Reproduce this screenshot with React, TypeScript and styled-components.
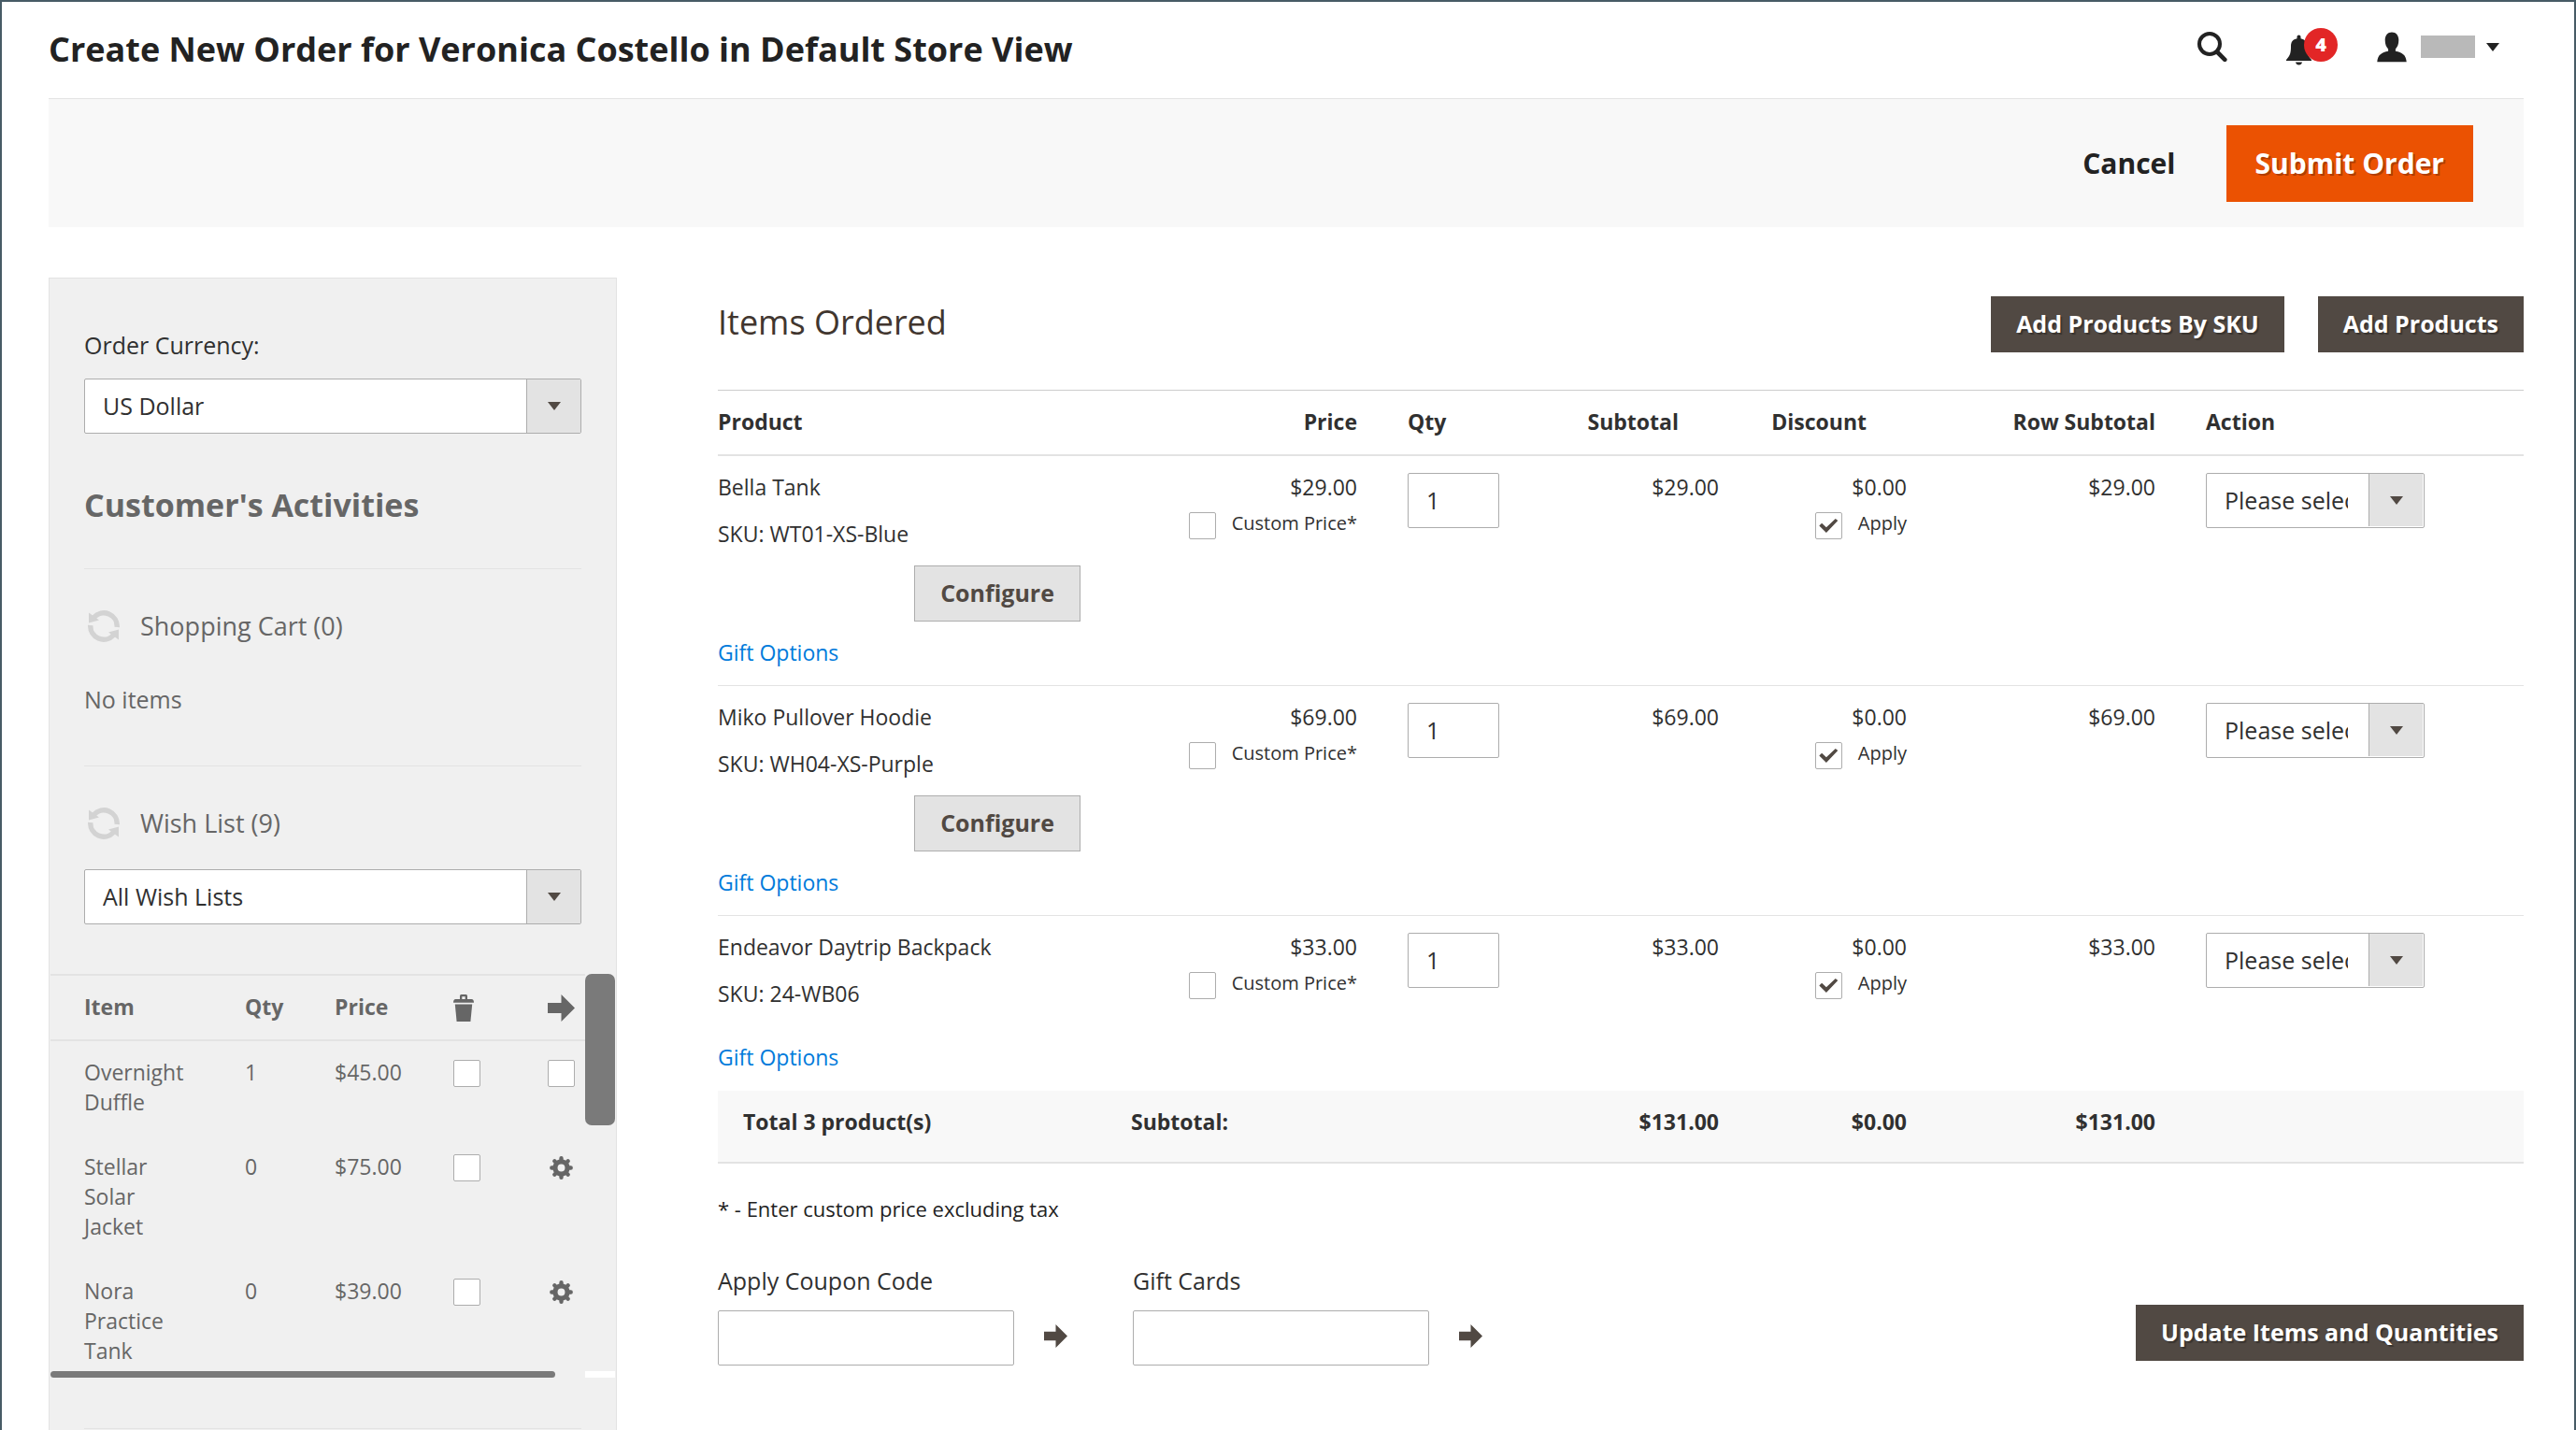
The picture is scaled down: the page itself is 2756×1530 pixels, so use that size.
import React from "react";
import styled, { createGlobalStyle, css } from "styled-components";

const color = {
  frame: "#475b66",
  ink: "#303030",
  dark: "#222222",
  brown: "#514943",
  muted: "#666666",
  line: "#e3e3e3",
  field: "#adadad",
  panel: "#f0f0f0",
  band: "#f8f8f8",
  link: "#007bdb",
  accent: "#eb5202",
  alert: "#e22626",
};

const GlobalStyle = createGlobalStyle`
  *, *::before, *::after { box-sizing: border-box; }
  body {
    margin: 0;
    background: #ffffff;
    color: ${color.ink};
    font-family: "Open Sans", "Noto Sans", sans-serif;
    font-size: 23px;
    line-height: 30px;
  }
  h1, h2, h3, p { margin: 0; font-weight: 400; }
  button, input, select { font-family: inherit; margin: 0; }
  button { cursor: pointer; }
`;

/* ---------- page frame ---------- */

const Page = styled.div`
  display: flex;
  flex-direction: column;
  height: 100vh;
  overflow: hidden;
  padding: 0 54px 0 50px;
  border: 2px solid ${color.frame};
  border-bottom: 0;
`;

const Header = styled.header`
  flex: none;
  display: flex;
  align-items: center;
  justify-content: space-between;
  height: 103px;
  padding: 0 26px 1px 0;
`;

const PageTitle = styled.h1`
  font-size: 36px;
  line-height: 48px;
  font-weight: 700;
  color: ${color.dark};
`;

const HeaderTools = styled.div`
  display: flex;
  align-items: center;
  padding-bottom: 6px;
  color: ${color.dark};
`;

const PlainButton = styled.button`
  display: flex;
  align-items: center;
  padding: 0;
  border: 0;
  background: none;
  color: inherit;
  line-height: 0;
`;

const BellButton = styled(PlainButton)`
  position: relative;
  align-items: flex-end;
  width: 55px;
  height: 40px;
  margin: 0 42px 0 63px;
`;

const Badge = styled.span`
  position: absolute;
  top: 0;
  right: 0;
  width: 36px;
  height: 36px;
  border-radius: 50%;
  background: ${color.alert};
  color: #ffffff;
  font-size: 20px;
  line-height: 36px;
  font-weight: 800;
  text-align: center;
`;

const AccountName = styled.span`
  width: 58px;
  height: 24px;
  margin: 0 12px 0 15px;
  background: #b9b9b9;
`;

const Caret = styled.span`
  width: 0;
  height: 0;
  border: 7px solid transparent;
  border-top: 9px solid currentColor;
  border-bottom: 0;
`;

const ActionBar = styled.div`
  flex: none;
  display: flex;
  justify-content: flex-end;
  gap: 54px;
  padding: 28px 54px 27px;
  border-top: 1px solid ${color.line};
  background: ${color.band};
`;

const CancelButton = styled.button`
  padding: 0 0 2px;
  border: 0;
  background: none;
  color: ${color.dark};
  font-size: 30px;
  font-weight: 700;
`;

const SubmitButton = styled.button`
  height: 82px;
  padding: 0 31px 2px;
  border: 0;
  background: ${color.accent};
  color: #ffffff;
  font-size: 30px;
  font-weight: 700;
  text-shadow: 2px 2px 0 rgba(0, 0, 0, 0.25);
`;

const Columns = styled.div`
  flex: 1 0 auto;
  display: grid;
  grid-template-columns: 608px minmax(0, 1fr);
  column-gap: 108px;
  padding-top: 54px;
`;

/* ---------- shared controls ---------- */

const Button = styled.button<{ $light?: boolean }>`
  height: 60px;
  padding: 0 27px 2px;
  border: 0;
  background: ${color.brown};
  color: #ffffff;
  font-size: 25px;
  font-weight: 700;
  text-shadow: 2px 2px 1px rgba(0, 0, 0, 0.3);
  ${(p) =>
    p.$light &&
    css`
      border: 1px solid ${color.field};
      background: ${color.line};
      color: ${color.brown};
      text-shadow: none;
    `}
`;

const fieldBox = css`
  height: 59px;
  border: 1px solid ${color.field};
  border-radius: 2px;
  background: #ffffff;
  color: ${color.ink};
  font-size: 25px;
`;

const TextField = styled.input<{ $width: number }>`
  ${fieldBox}
  display: block;
  width: ${(p) => p.$width}px;
  padding: 0 19px 2px;
`;

const SelectWrap = styled.span<{ $width?: number }>`
  position: relative;
  display: block;
  width: ${(p) => (p.$width ? `${p.$width}px` : "100%")};
  color: ${color.brown};
`;

const SelectField = styled.select`
  ${fieldBox}
  appearance: none;
  display: block;
  width: 100%;
  padding: 0 81px 2px 19px;
`;

const SelectArrow = styled.span<{ $inset: number }>`
  position: absolute;
  top: 1px;
  right: ${(p) => p.$inset}px;
  bottom: ${(p) => p.$inset}px;
  display: grid;
  place-items: center;
  width: 58px;
  border-left: 1px solid ${color.field};
  background: ${color.line};
  pointer-events: none;
`;

const Checkbox = styled.input.attrs({ type: "checkbox" })`
  appearance: none;
  flex: none;
  display: grid;
  place-items: center;
  width: 29px;
  height: 29px;
  border: 1px solid ${color.field};
  border-radius: 2px;
  background: #ffffff;
  &:checked::before {
    content: "";
    width: 20px;
    height: 15px;
    background: ${color.brown};
    clip-path: polygon(0 50%, 14% 32%, 38% 62%, 87% 0, 100% 14%, 38% 100%);
  }
`;

type SelectProps = { id?: string; label?: string; options: string[]; width?: number; inset?: number };

const Select = ({ id, label, options, width, inset = 1 }: SelectProps) => (
  <SelectWrap $width={width}>
    <SelectField id={id} aria-label={label}>
      {options.map((o) => (
        <option key={o}>{o}</option>
      ))}
    </SelectField>
    <SelectArrow $inset={inset}>
      <Caret />
    </SelectArrow>
  </SelectWrap>
);

/* ---------- icons ---------- */

const SearchIcon = () => (
  <svg width="32" height="32" viewBox="0 0 32 32" fill="none" stroke="currentColor">
    <circle cx="13" cy="13" r="11" strokeWidth="4" />
    <path d="M21 21.5 29.3 29.8" strokeWidth="4.6" strokeLinecap="round" />
  </svg>
);

const BellIcon = () => (
  <svg width="27" height="33" viewBox="0 0 27 33" fill="currentColor">
    <path d="M13.5 0.5c1.2 0 2 .8 2 2v1.8c4.600.8 6.500 3.700 6.500 8.200 0 7 .8 10 5 14.500v1H0v-1c4.200-4.500 5-7.500 5-14.500 0-4.500 1.900-7.400 6.500-8.200V2.500c0-1.200.8-2 2-2z" />
    <path d="M10 29.500h7c-.4 1.900-1.700 3-3.500 3s-3.100-1.100-3.500-3z" />
  </svg>
);

const UserIcon = () => (
  <svg width="32" height="33" viewBox="0 0 32 33" fill="currentColor">
    <path d="M16 .5c4.500 0 7.300 3.300 7.300 8.300 0 4.200-1.200 7.600-3.400 9.600v2.300c7 1.300 11.300 3.900 11.800 11.500H.3C.8 24.600 5.100 22 12.100 20.700v-2.300c-2.200-2-3.400-5.400-3.400-9.600C8.700 3.800 11.500.5 16 .5z" />
  </svg>
);

const RefreshIcon = () => (
  <svg width="34" height="34" viewBox="0 0 34 34">
    <g fill="none" stroke="#d3d3d3" strokeWidth="5.500">
      <path d="M31.200 18A14.200 14.200 0 0 0 6.500 7.500" />
      <path d="M2.800 16A14.200 14.200 0 0 0 27.500 26.500" />
    </g>
    <path d="M1 2.500V13.500L12 10.500Z M33 31.500V20.500L22 23.500Z" fill="#d3d3d3" />
  </svg>
);

const TrashIcon = () => (
  <svg width="22" height="29" viewBox="0 0 22 29" fill="currentColor">
    <path d="M7 5V1.500Q7 0 8.500 0h5Q15 0 15 1.500V5h4.500Q22 5.300 22 8.800H0Q0 5.300 2.500 5zM9.300 2.300V5h3.400V2.300z" fillRule="evenodd" />
    <path d="M1.800 10.500h18.400L18.400 29H3.600z" />
  </svg>
);

const ArrowIcon = ({ size }: { size: number }) => (
  <svg width={size} height={size} viewBox="0 0 29 29" fill="currentColor">
    <path d="M0 9H14.500V0L29 14.500L14.500 29V20H0Z" />
  </svg>
);

const GearIcon = () => (
  <svg width="25" height="25" viewBox="0 0 24 24" fill="none" stroke="currentColor">
    <circle cx="12" cy="12" r="6.300" strokeWidth="5" />
    <g strokeWidth="4.200" strokeLinecap="round">
      <path d="M12 3.500V2.200M12 20.500v1.300M3.500 12H2.200M20.500 12h1.300M6 6l-.9-.9M18 18l.9.9M18 6l.9-.9M6 18l-.9.9" />
    </g>
  </svg>
);

/* ---------- sidebar ---------- */

const Sidebar = styled.aside`
  padding: 54px 37px 0;
  border: 1px solid ${color.line};
  border-bottom: 0;
  background: ${color.panel};
  color: ${color.muted};
`;

const FieldLabel = styled.label<{ $gap: number }>`
  display: block;
  margin-bottom: ${(p) => p.$gap}px;
  color: ${color.ink};
  font-size: 25px;
  line-height: 34px;
`;

const ActivitiesTitle = styled.h2`
  margin: 54px 0 46px;
  font-size: 34px;
  line-height: 44px;
  font-weight: 700;
`;

const Section = styled.section`
  padding: 43px 0 54px;
  border-top: 1px solid ${color.line};
`;

const SectionTitle = styled.h3`
  display: flex;
  align-items: center;
  gap: 22px;
  padding-left: 4px;
  font-size: 27px;
  line-height: 36px;
`;

const EmptyText = styled.p`
  margin-top: 43px;
  font-size: 25px;
  line-height: 34px;
`;

const WishFilter = styled.div`
  margin: 31px 0 53px;
`;

const Scroller = styled.div`
  display: grid;
  grid-template-columns: minmax(0, 1fr) 32px;
  grid-template-rows: 425px 7px;
  margin: 0 -36px;
`;

const ScrollView = styled.div`
  overflow: hidden;
`;

const Thumb = styled.div<{ $length: string; $vertical?: boolean }>`
  border-radius: ${(p) => (p.$vertical ? 7 : 4)}px;
  background: #7a7a7a;
  width: ${(p) => (p.$vertical ? "100%" : p.$length)};
  height: ${(p) => (p.$vertical ? p.$length : "100%")};
`;

const Corner = styled.div`
  background: #ffffff;
`;

const WishTable = styled.table`
  width: 606px;
  table-layout: fixed;
  border-collapse: separate;
  border-spacing: 0;
  line-height: 32px;
  th,
  td {
    padding: 17px 0 20px;
    text-align: left;
    vertical-align: top;
  }
  th {
    padding-bottom: 19px;
    border: solid ${color.line};
    border-width: 2px 0;
    font-weight: 700;
  }
  th:first-child,
  td:first-child {
    padding-left: 36px;
    padding-right: 55px;
  }
  svg {
    display: block;
  }
`;

const IconCell = styled.div`
  display: flex;
  align-items: flex-end;
  height: 32px;
`;

const CheckCell = styled.div`
  display: flex;
  height: 32px;
  padding-top: 3px;
`;

const GearButton = styled(PlainButton)`
  height: 29px;
  padding: 0 2px;
`;

const wishes = [
  { name: "Overnight Duffle", qty: 1, price: "$45.00", configurable: false },
  { name: "Stellar Solar Jacket", qty: 0, price: "$75.00", configurable: true },
  { name: "Nora Practice Tank", qty: 0, price: "$39.00", configurable: true },
];

const WishList = () => (
  <Scroller>
    <ScrollView>
      <WishTable>
        <colgroup>
          <col width="208" />
          <col width="96" />
          <col width="127" />
          <col width="101" />
          <col />
        </colgroup>
        <thead>
          <tr>
            <th>Item</th>
            <th>Qty</th>
            <th>Price</th>
            <th aria-label="Remove">
              <IconCell>
                <TrashIcon />
              </IconCell>
            </th>
            <th aria-label="Add to order">
              <IconCell>
                <ArrowIcon size={29} />
              </IconCell>
            </th>
          </tr>
        </thead>
        <tbody>
          {wishes.map((w) => (
            <tr key={w.name}>
              <td>{w.name}</td>
              <td>{w.qty}</td>
              <td>{w.price}</td>
              <td>
                <CheckCell>
                  <Checkbox aria-label={`Remove ${w.name}`} />
                </CheckCell>
              </td>
              <td>
                <CheckCell>
                  {w.configurable ? (
                    <GearButton aria-label={`Configure ${w.name}`}>
                      <GearIcon />
                    </GearButton>
                  ) : (
                    <Checkbox aria-label={`Add ${w.name}`} />
                  )}
                </CheckCell>
              </td>
            </tr>
          ))}
        </tbody>
      </WishTable>
    </ScrollView>
    <Thumb $vertical $length="162px" />
    <Thumb $length="540px" />
    <Corner />
  </Scroller>
);

/* ---------- items ordered ---------- */

const MainHead = styled.div`
  display: flex;
  align-items: center;
  gap: 36px;
  padding: 20px 0 40px;
`;

const MainTitle = styled.h2`
  flex: 1;
  padding-bottom: 4px;
  color: #41362f;
  font-size: 36px;
  line-height: 48px;
`;

const ItemsTable = styled.table`
  width: 100%;
  table-layout: fixed;
  border-collapse: separate;
  border-spacing: 0;
  border-top: 1px solid #cccccc;
`;

const HeadCell = styled.th<{ $right?: boolean; $inset?: boolean }>`
  padding: 18px 27px 20px;
  padding-right: ${(p) => (p.$inset ? 70 : 27)}px;
  border-bottom: 2px solid ${color.line};
  font-weight: 700;
  text-align: ${(p) => (p.$right ? "right" : "left")};
  white-space: nowrap;
  &:first-child {
    padding-left: 0;
  }
`;

const Cell = styled.td<{ $right?: boolean }>`
  height: 118px;
  padding: 18px 27px 0;
  text-align: ${(p) => (p.$right ? "right" : "left")};
  vertical-align: top;
  &:first-child {
    padding-left: 0;
  }
`;

const ItemBody = styled.tbody`
  &:last-of-type td[colspan] {
    border-bottom-color: transparent;
  }
`;

const GiftCell = styled.td`
  padding: 18px 0 20px;
  border-bottom: 1px solid ${color.line};
`;

const Link = styled.a`
  color: ${color.link};
  text-decoration: none;
`;

const Sku = styled.div`
  margin-top: 20px;
`;

const ConfigureRow = styled.div`
  display: flex;
  justify-content: flex-end;
  margin-top: 19px;
`;

const CheckLabel = styled.label`
  display: flex;
  justify-content: flex-end;
  gap: 17px;
  margin-top: 10px;
  font-size: 20px;
  line-height: 27px;
  ${Checkbox} {
    margin-top: 2px;
  }
`;

const TotalCell = styled.td<{ $right?: boolean }>`
  padding: 18px 27px 28px;
  border-bottom: 2px solid ${color.line};
  background: ${color.band};
  font-weight: 700;
  text-align: ${(p) => (p.$right ? "right" : "left")};
`;

const Note = styled.p`
  margin-top: 33px;
  color: ${color.dark};
  font-size: 22px;
  line-height: 30px;
`;

const FootRow = styled.div`
  display: flex;
  align-items: flex-end;
  margin-top: 45px;
`;

const CodeForm = styled.form`
  width: 444px;
`;

const CodeRow = styled.div`
  display: flex;
  align-items: center;
  gap: 32px;
  color: ${color.brown};
`;

const CodeSubmit = styled(PlainButton)`
  padding-bottom: 5px;
`;

const PushRight = styled.div`
  margin: 0 0 5px auto;
`;

const items = [
  { name: "Bella Tank", sku: "WT01-XS-Blue", price: "$29.00", configurable: true },
  { name: "Miko Pullover Hoodie", sku: "WH04-XS-Purple", price: "$69.00", configurable: true },
  { name: "Endeavor Daytrip Backpack", sku: "24-WB06", price: "$33.00", configurable: false },
];

const ItemRows = ({ item }: { item: (typeof items)[number] }) => (
  <ItemBody>
    <tr>
      <Cell>
        <div>{item.name}</div>
        <Sku>SKU: {item.sku}</Sku>
        {item.configurable && (
          <ConfigureRow>
            <Button type="button" $light>
              Configure
            </Button>
          </ConfigureRow>
        )}
      </Cell>
      <Cell $right>
        {item.price}
        <CheckLabel>
          <Checkbox />
          Custom Price*
        </CheckLabel>
      </Cell>
      <Cell>
        <TextField $width={98} defaultValue="1" aria-label={`Quantity of ${item.name}`} />
      </Cell>
      <Cell $right>{item.price}</Cell>
      <Cell $right>
        $0.00
        <CheckLabel>
          <Checkbox defaultChecked />
          Apply
        </CheckLabel>
      </Cell>
      <Cell $right>{item.price}</Cell>
      <Cell>
        <Select width={234} inset={2} label={`Action for ${item.name}`} options={["Please select"]} />
      </Cell>
    </tr>
    <tr>
      <GiftCell colSpan={7}>
        <Link href="#gift-options">Gift Options</Link>
      </GiftCell>
    </tr>
  </ItemBody>
);

const CodeField = ({ id, label }: { id: string; label: string }) => (
  <CodeForm>
    <FieldLabel htmlFor={id} $gap={15}>
      {label}
    </FieldLabel>
    <CodeRow>
      <TextField id={id} $width={317} />
      <CodeSubmit type="button" aria-label={`Submit ${label}`}>
        <ArrowIcon size={25} />
      </CodeSubmit>
    </CodeRow>
  </CodeForm>
);

export default function App() {
  return (
    <>
      <GlobalStyle />
      <Page>
        <Header>
          <PageTitle>Create New Order for Veronica Costello in Default Store View</PageTitle>
          <HeaderTools>
            <PlainButton aria-label="Search">
              <SearchIcon />
            </PlainButton>
            <BellButton aria-label="Notifications">
              <BellIcon />
              <Badge>4</Badge>
            </BellButton>
            <PlainButton aria-label="Account">
              <UserIcon />
              <AccountName />
              <Caret />
            </PlainButton>
          </HeaderTools>
        </Header>

        <ActionBar>
          <CancelButton>Cancel</CancelButton>
          <SubmitButton>Submit Order</SubmitButton>
        </ActionBar>

        <Columns>
          <Sidebar>
            <FieldLabel htmlFor="currency" $gap={19}>
              Order Currency:
            </FieldLabel>
            <Select id="currency" options={["US Dollar"]} />
            <ActivitiesTitle>Customer's Activities</ActivitiesTitle>
            <Section>
              <SectionTitle>
                <RefreshIcon />
                Shopping Cart (0)
              </SectionTitle>
              <EmptyText>No items</EmptyText>
            </Section>
            <Section>
              <SectionTitle>
                <RefreshIcon />
                Wish List (9)
              </SectionTitle>
              <WishFilter>
                <Select label="Wish list" options={["All Wish Lists"]} />
              </WishFilter>
              <WishList />
            </Section>
            <Section />
          </Sidebar>

          <main>
            <MainHead>
              <MainTitle>Items Ordered</MainTitle>
              <Button type="button">Add Products By SKU</Button>
              <Button type="button">Add Products</Button>
            </MainHead>

            <ItemsTable>
              <colgroup>
                <col />
                <col width="296" />
                <col width="152" />
                <col width="235" />
                <col width="201" />
                <col width="266" />
                <col width="367" />
              </colgroup>
              <thead>
                <tr>
                  <HeadCell>Product</HeadCell>
                  <HeadCell $right>Price</HeadCell>
                  <HeadCell>Qty</HeadCell>
                  <HeadCell $right $inset>
                    Subtotal
                  </HeadCell>
                  <HeadCell $right $inset>
                    Discount
                  </HeadCell>
                  <HeadCell $right>Row Subtotal</HeadCell>
                  <HeadCell>Action</HeadCell>
                </tr>
              </thead>
              {items.map((item) => (
                <ItemRows key={item.sku} item={item} />
              ))}
              <tfoot>
                <tr>
                  <TotalCell>Total 3 product(s)</TotalCell>
                  <TotalCell colSpan={2}>Subtotal:</TotalCell>
                  <TotalCell $right>$131.00</TotalCell>
                  <TotalCell $right>$0.00</TotalCell>
                  <TotalCell $right>$131.00</TotalCell>
                  <TotalCell />
                </tr>
              </tfoot>
            </ItemsTable>

            <Note>* - Enter custom price excluding tax</Note>

            <FootRow>
              <CodeField id="coupon" label="Apply Coupon Code" />
              <CodeField id="gift-card" label="Gift Cards" />
              <PushRight>
                <Button type="button">Update Items and Quantities</Button>
              </PushRight>
            </FootRow>
          </main>
        </Columns>
      </Page>
    </>
  );
}
